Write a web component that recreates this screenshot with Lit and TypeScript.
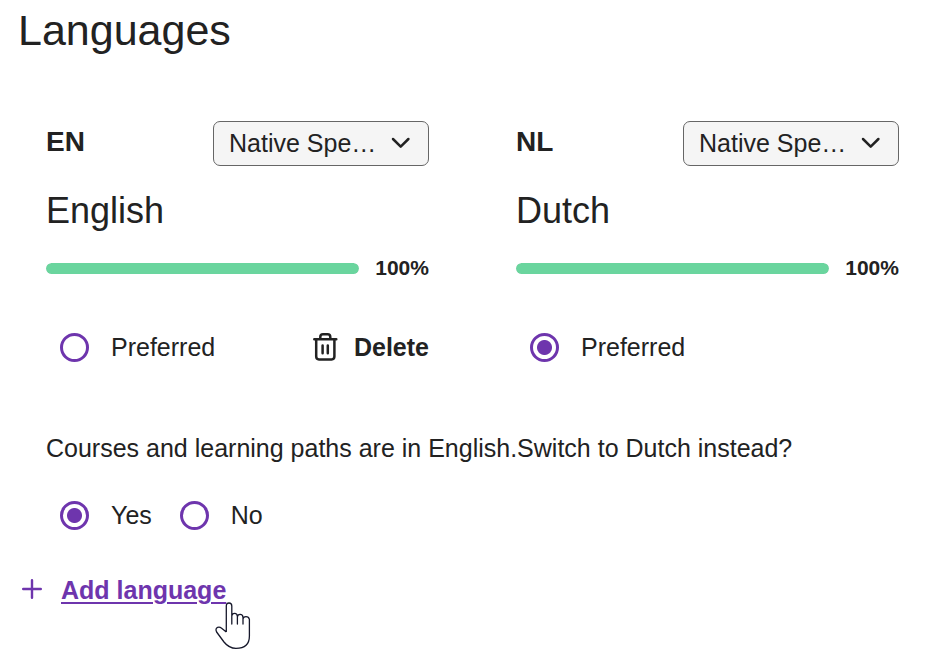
import { LitElement, html, css, nothing } from "lit";
import { customElement, property, state } from "lit/decorators.js";

const LEVELS = ["Native Speaker", "Fluent", "Intermediate", "Beginner"];

const shared = css`
  .radio {
    display: inline-flex;
    align-items: center;
    gap: 22px;
    cursor: pointer;
  }
  .radio input {
    appearance: none;
    flex: none;
    box-sizing: border-box;
    width: 29px;
    height: 29px;
    margin: 0;
    border: 3px solid #6e35ad;
    border-radius: 50%;
    background: #fff;
  }
  .radio input:checked {
    background: radial-gradient(circle, #6e35ad 7px, #fff 8px);
  }
`;

@customElement("language-card")
export class LanguageCard extends LitElement {
  @property() code = "";
  @property() name = "";
  @property({ type: Number }) progress = 100;
  @property({ type: Boolean }) preferred = false;
  @property({ type: Boolean }) removable = false;

  static styles = [
    shared,
    css`
      :host {
        display: block;
        min-width: 0;
      }
      .row {
        display: flex;
        align-items: flex-start;
        justify-content: space-between;
      }
      .code {
        font-size: 28px;
        line-height: 42px;
        font-weight: bold;
      }
      .picker {
        display: grid;
        align-items: center;
        width: 216px;
      }
      .picker select,
      .picker svg {
        grid-area: 1 / 1;
      }
      .picker select {
        appearance: none;
        box-sizing: border-box;
        width: 100%;
        height: 45px;
        margin: 0;
        padding: 0 48px 2px 15px;
        border: 1px solid #666;
        border-radius: 7px;
        background: #f5f5f5;
        color: #222;
        font: inherit;
        text-overflow: ellipsis;
      }
      .picker svg {
        justify-self: end;
        margin-right: 18px;
        pointer-events: none;
      }
      .name {
        margin: 24px 0 0;
        font-size: 36px;
        line-height: 42px;
        font-weight: normal;
      }
      .level {
        display: flex;
        align-items: center;
        gap: 16px;
        margin-top: 24px;
        font-size: 21px;
        line-height: 24px;
        font-weight: bold;
      }
      .track {
        flex: 1;
        height: 11px;
        border-radius: 6px;
        background: #e6e6e6;
        overflow: hidden;
      }
      .fill {
        height: 100%;
        border-radius: 6px;
        background: #6ad59e;
      }
      .actions {
        margin-top: 51px;
        padding-left: 14px;
        height: 32px;
      }
      .delete {
        display: inline-flex;
        align-items: center;
        gap: 16px;
        padding: 0;
        border: 0;
        background: none;
        color: inherit;
        font: inherit;
        font-weight: bold;
        cursor: pointer;
      }
    `,
  ];

  render() {
    return html`
      <div class="row">
        <span class="code">${this.code}</span>
        <span class="picker">
          <select aria-label="${this.name} level">
            ${LEVELS.map((l) => html`<option>${l}</option>`)}
          </select>
          <svg width="20" height="14" viewBox="0 0 20 14" fill="none" stroke="#222" stroke-width="2.5" stroke-linecap="round" stroke-linejoin="round">
            <path d="M2 2 9.7 9.6 17.4 2" />
          </svg>
        </span>
      </div>
      <h2 class="name">${this.name}</h2>
      <div class="level">
        <div class="track"><div class="fill" style="width:${this.progress}%"></div></div>
        <span>${this.progress}%</span>
      </div>
      <div class="row actions">
        <label class="radio">
          <input
            type="radio"
            .checked=${this.preferred}
            @change=${() => this.dispatchEvent(new CustomEvent("prefer"))}
          />Preferred
        </label>
        ${this.removable
          ? html`<button class="delete" type="button">
              <svg width="25" height="28" viewBox="0 0 25 28" fill="none" stroke="#222" stroke-width="2.5" stroke-linecap="round" stroke-linejoin="round">
                <path d="M1.3 6.3H23.3M7.3 5.8V4Q7.3 1.3 10 1.3H14.6Q17.3 1.3 17.3 4V5.8M3.2 6.4V23.6Q3.2 26.4 6 26.4H18.6Q21.4 26.4 21.4 23.6V6.4M9.6 12.4V20.2M14.8 12.4V20.2" />
              </svg>
              Delete
            </button>`
          : nothing}
      </div>
    `;
  }
}

@customElement("app-root")
export class AppRoot extends LitElement {
  @state() private preferred = "NL";

  static styles = [
    shared,
    css`
      :host {
        display: block;
        color: #222;
        font: 25px/32px "Liberation Sans", Arial, sans-serif;
      }
      .page {
        padding: 4px 52px 48px 18px;
      }
      .title {
        margin: 0;
        font-size: 43px;
        line-height: 52px;
        font-weight: normal;
      }
      .body {
        padding-left: 28px;
      }
      .cards {
        display: grid;
        grid-template-columns: 1fr 1fr;
        column-gap: 87px;
        margin-top: 65px;
      }
      .question {
        margin: 0;
        padding: 69px 0 0;
        border: 0;
      }
      .question legend {
        float: left;
        padding: 0;
      }
      .choices {
        clear: both;
        display: flex;
        gap: 28px;
        padding: 35px 0 0 14px;
      }
      .add {
        display: inline-flex;
        align-items: center;
        gap: 19px;
        position: relative;
        margin: 43px 0 0 4px;
        color: #6e35ad;
        font-weight: bold;
        text-decoration: none;
      }
      .add span {
        text-decoration: underline;
        text-decoration-thickness: 2px;
        text-underline-offset: 3px;
      }
      .pointer {
        position: absolute;
        left: 193px;
        top: 28px;
      }
    `,
  ];

  private card(code: string, name: string, removable: boolean) {
    return html`<language-card
      code=${code}
      name=${name}
      ?removable=${removable}
      .preferred=${this.preferred === code}
      @prefer=${() => (this.preferred = code)}
    ></language-card>`;
  }

  render() {
    return html`
      <main class="page">
        <h1 class="title">Languages</h1>
        <div class="body">
          <div class="cards">
            ${this.card("EN", "English", true)} ${this.card("NL", "Dutch", false)}
          </div>
          <fieldset class="question">
            <legend>Courses and learning paths are in English.Switch to Dutch instead?</legend>
            <div class="choices">
              <label class="radio"><input type="radio" name="switch" checked />Yes</label>
              <label class="radio"><input type="radio" name="switch" />No</label>
            </div>
          </fieldset>
        </div>
        <a class="add" href="#add">
          <svg width="20" height="22" viewBox="0 0 20 22" fill="none" stroke="#6e35ad" stroke-width="2.4" stroke-linecap="round">
            <path d="M10 1.2V18.8M1.2 10H18.8" />
          </svg>
          <span>Add language</span>
          <svg class="pointer" width="36" height="48" viewBox="0 0 36 48" fill="#fff" stroke="#15172a" stroke-width="1.3" stroke-linejoin="round">
            <path d="M11.3 30V4Q11.3 1 14 1T16.8 4V22V14Q17 11.4 19.6 11.4T22.4 14.4V22V15Q22.6 12.4 25.2 12.4T28 15.4V22V17Q28.3 14.6 31 14.6T34.4 17.4V34Q34.4 46.4 21 46.4Q14 46.4 9 40L1.6 30Q0 26.6 2.6 25.4Q4.6 24.6 6.6 26.2L11.3 30" />
          </svg>
        </a>
      </main>
    `;
  }
}
